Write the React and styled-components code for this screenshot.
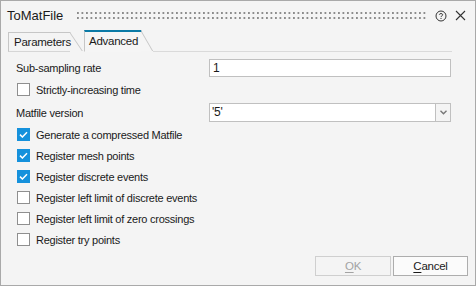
import React from 'react';
import styled, { createGlobalStyle } from 'styled-components';

const GlobalStyle = createGlobalStyle`
  html, body {
    margin: 0;
    padding: 0;
    background: #f4f4f4;
  }
  body {
    font-family: 'Liberation Sans', Arial, sans-serif;
    font-size: 11px;
    letter-spacing: -0.25px;
    color: #1a1a1a;
  }
`;

const Window = styled.div`
  box-sizing: border-box;
  width: 476px;
  height: 286px;
  border: 1px solid #a9a9a9;
  background: #f4f4f4;
  display: flex;
  flex-direction: column;
`;

const TitleBar = styled.div`
  height: 29px;
  display: flex;
  align-items: center;
  padding: 0 8px 0 6px;
`;

const Title = styled.div`
  font-size: 13px;
  letter-spacing: 0;
  color: #1a1a1a;
  margin-right: 14px;
`;

const Grip = styled.div`
  flex: 1;
  height: 7px;
  margin: 0 8px 0 0;
  background-image: radial-gradient(circle at 1px 1px, #8c8c8c 1.05px, transparent 1.3px);
  background-size: 4.5px 5px;
`;

const IconButton = styled.div`
  width: 14px;
  height: 14px;
  display: flex;
  align-items: center;
  justify-content: center;
  margin-left: ${(p) => p.$gap || 0}px;
`;

const TabStrip = styled.div`
  position: relative;
  z-index: 0;
  height: 22px;
  display: flex;
  align-items: flex-end;
  padding-left: 7px;
  padding-right: 23px;
`;

const Tab = styled.div`
  position: relative;
  box-sizing: border-box;
  width: ${(p) => p.$w}px;
  height: ${(p) => (p.$active ? 22 : 20)}px;
  padding-left: ${(p) => (p.$active ? 4 : 5)}px;
  margin-right: ${(p) => p.$mr || 0}px;
  border-left: 1px solid #c6c6c6;
  border-top: ${(p) => (p.$active ? '2px solid #0a7aa6' : '1px solid #c6c6c6')};
  border-bottom: ${(p) => (p.$active ? '1px solid #f5f5f5' : '1px solid #d6d6d6')};
  background: ${(p) => (p.$active ? '#f5f5f5' : '#f4f4f4')};
  line-height: 19px;
  font-size: 11.5px;
  color: #1a1a1a;
  white-space: nowrap;

  &::after {
    content: '';
    position: absolute;
    box-sizing: border-box;
    top: ${(p) => (p.$active ? -2 : -1)}px;
    right: 0;
    width: 12px;
    height: calc(100% + ${(p) => (p.$active ? 2 : 1)}px);
    border-top: ${(p) => (p.$active ? '2px solid #0a7aa6' : '1px solid #c6c6c6')};
    border-right: 1px solid #c6c6c6;
    transform: skewX(${(p) => p.$skew}deg);
    transform-origin: top left;
    background: inherit;
    z-index: -1;
  }
`;

const StripLine = styled.div`
  flex: 1;
  height: 0;
  border-bottom: 1px solid #dadada;
  margin-left: 12px;
`;

const Panel = styled.div`
  flex: 1;
  display: flex;
  flex-direction: column;
  padding: 7px 24px 0 15px;
`;

const FieldRow = styled.div`
  display: grid;
  grid-template-columns: 193px 1fr;
  align-items: center;
  height: 18px;
  margin-top: ${(p) => p.$mt || 0}px;
`;

const Label = styled.div`
  font-size: 11px;
  color: #1a1a1a;
`;

const TextInput = styled.div`
  box-sizing: border-box;
  height: 18px;
  border: 1px solid #c0c0c0;
  background: #fff;
  padding-left: 3px;
  line-height: 16px;
  font-size: 12px;
`;

const Combo = styled.div`
  box-sizing: border-box;
  height: 19px;
  display: flex;
  border: 1px solid #c0c0c0;
  background: #fff;
`;

const ComboValue = styled.div`
  flex: 1;
  padding-left: 2px;
  line-height: 17px;
  font-size: 12px;
`;

const ComboButton = styled.div`
  width: 14px;
  border-left: 1px solid #c0c0c0;
  background: #f4f4f4;
  display: flex;
  align-items: center;
  justify-content: center;
`;

const CheckRow = styled.div`
  display: flex;
  align-items: center;
  height: 21px;
  margin-top: ${(p) => p.$mt || 0}px;
`;

const Box = styled.div`
  box-sizing: border-box;
  width: 13px;
  height: 13px;
  margin: 0 6px 0 1px;
  border: 1px solid ${(p) => (p.$checked ? '#1591dc' : '#8f8f8f')};
  background: ${(p) => (p.$checked ? '#1591dc' : '#ffffff')};
  display: flex;
  align-items: center;
  justify-content: center;
`;

const Footer = styled.div`
  margin-top: auto;
  display: flex;
  justify-content: flex-end;
  gap: 2px;
  padding: 0 7px 9px 0;
`;

const Button = styled.div`
  box-sizing: border-box;
  width: ${(p) => p.$w}px;
  height: 20px;
  border: 1px solid ${(p) => (p.$disabled ? '#cfcfcf' : '#adadad')};
  background: ${(p) => (p.$disabled ? '#f4f4f4' : '#fbfbfb')};
  color: ${(p) => (p.$disabled ? '#a3a3a3' : '#1a1a1a')};
  text-align: center;
  line-height: 18px;
  font-size: 11.5px;

  u {
    text-decoration-thickness: 1px;
    text-underline-offset: 2px;
  }
`;

const Check = () => (
  <svg width="9" height="7" viewBox="0 0 9 7">
    <path d="M1 3.6 L3.4 6 L8 1.2" fill="none" stroke="#fff" strokeWidth="1.5" />
  </svg>
);

const Checkbox = ({ checked, label, mt }) => (
  <CheckRow $mt={mt}>
    <Box $checked={checked}>{checked && <Check />}</Box>
    <Label>{label}</Label>
  </CheckRow>
);

const checks = [
  { label: 'Generate a compressed Matfile', checked: true },
  { label: 'Register mesh points', checked: true },
  { label: 'Register discrete events', checked: true },
  { label: 'Register left limit of discrete events', checked: false },
  { label: 'Register left limit of zero crossings', checked: false },
  { label: 'Register try points', checked: false },
];

export default function App() {
  return (
    <>
      <GlobalStyle />
      <Window>
        <TitleBar>
          <Title>ToMatFile</Title>
          <Grip />
          <IconButton>
            <svg width="12" height="12" viewBox="0 0 12 12">
              <circle cx="6" cy="6" r="5" fill="none" stroke="#333" strokeWidth="1" />
              <path d="M4.3 4.7 C4.3 3.2 7.7 3.2 7.7 4.7 C7.7 5.9 6 5.8 6 7.1" fill="none" stroke="#333" strokeWidth="1" />
              <rect x="5.5" y="8" width="1" height="1" fill="#333" />
            </svg>
          </IconButton>
          <IconButton $gap={5}>
            <svg width="11" height="11" viewBox="0 0 11 11">
              <path d="M1 1 L10 10 M10 1 L1 10" stroke="#333" strokeWidth="1.1" />
            </svg>
          </IconButton>
        </TitleBar>
        <TabStrip>
          <Tab $w={62} $mr={14} $skew={34}>Parameters</Tab>
          <Tab $active $w={57} $skew={30}>Advanced</Tab>
          <StripLine />
        </TabStrip>
        <Panel>
          <FieldRow>
            <Label>Sub-sampling rate</Label>
            <TextInput>1</TextInput>
          </FieldRow>
          <Checkbox label="Strictly-increasing time" mt={2} />
          <FieldRow $mt={3}>
            <Label>Matfile version</Label>
            <Combo>
              <ComboValue>'5'</ComboValue>
              <ComboButton>
                <svg width="7" height="5" viewBox="0 0 7 5">
                  <path d="M0.5 0.8 L3.5 3.8 L6.5 0.8" fill="none" stroke="#777" strokeWidth="1.4" />
                </svg>
              </ComboButton>
            </Combo>
          </FieldRow>
          {checks.map((c, i) => (
            <Checkbox key={c.label} label={c.label} checked={c.checked} mt={i === 0 ? 3 : 0} />
          ))}
        </Panel>
        <Footer>
          <Button $disabled $w={76}>
            <u>O</u>K
          </Button>
          <Button $w={75}>
            <u>C</u>ancel
          </Button>
        </Footer>
      </Window>
    </>
  );
}
